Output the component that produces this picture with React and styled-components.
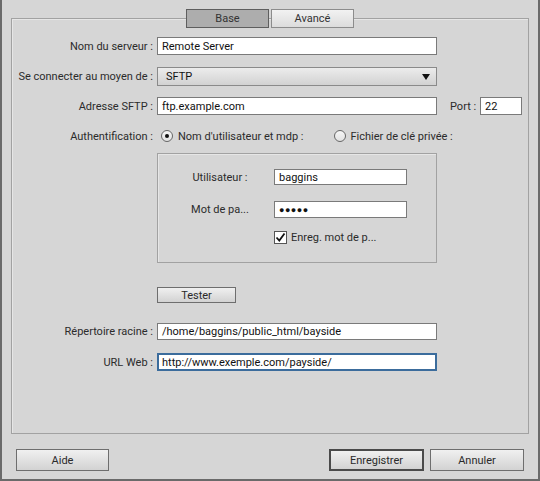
import React from 'react'
import styled, { createGlobalStyle } from 'styled-components'

const Global = createGlobalStyle`
  html, body {
    margin: 0;
    padding: 0;
    background: #d6d6d6;
  }
  * {
    box-sizing: border-box;
  }
`

const Window = styled.div`
  width: 540px;
  height: 481px;
  background: #d6d6d6;
  border: 2px solid #6a6a6a;
  border-top: none;
  padding: 18px 9px 0;
  display: flex;
  flex-direction: column;
  font-family: Roboto, 'Liberation Sans', Arial, sans-serif;
  font-size: 11px;
  color: #2b2b2b;
`

const Panel = styled.div`
  height: 416px;
  border: 1px solid #a2a2a2;
  box-shadow: inset 1px 1px 0 #e6e6e6;
`

const TabBar = styled.div`
  display: flex;
  justify-content: center;
  gap: 2px;
  margin-top: -10px;
`

const Tab = styled.div`
  width: 83px;
  height: 19px;
  display: flex;
  align-items: center;
  justify-content: center;
  border: 1px solid ${p => (p.$active ? '#5e5e5e' : '#8c8c8c')};
  background: ${p =>
    p.$active ? '#adadad' : 'linear-gradient(#f2f2f2, #dcdcdc)'};
  color: #333;
`

const Form = styled.div`
  display: flex;
  flex-direction: column;
  padding-top: 9px;
`

const Row = styled.div`
  display: flex;
  align-items: center;
  min-height: ${p => p.$h || 0}px;
  margin-top: ${p => p.$gap || 0}px;
`

const Label = styled.div`
  width: 141px;
  margin-right: 4px;
  text-align: right;
  white-space: nowrap;
`

const Input = styled.div`
  width: ${p => p.$w || 280}px;
  height: ${p => p.$h || 18}px;
  background: #fff;
  border: ${p => (p.$focus ? '2px solid #3b6c9c' : '1px solid #7a7a7a')};
  padding-left: ${p => (p.$focus ? 3 : 4)}px;
  display: flex;
  align-items: center;
  color: #111;
  white-space: nowrap;
  overflow: hidden;
`

const Dots = styled.span`
  font-size: 9px;
  letter-spacing: 0.5px;
`

const Select = styled.div`
  width: 280px;
  height: 19px;
  border: 1px solid #8a8a8a;
  background: linear-gradient(#ececec, #d2d2d2);
  display: flex;
  align-items: center;
  justify-content: space-between;
  padding: 0 6px 0 8px;
  color: #111;
`

const Arrow = styled.span`
  width: 0;
  height: 0;
  border-left: 4px solid transparent;
  border-right: 4px solid transparent;
  border-top: 6px solid #111;
`

const PortLabel = styled.span`
  width: 43px;
  padding-left: 13px;
  white-space: nowrap;
`

const Radio = styled.span`
  width: 12px;
  height: 12px;
  border-radius: 50%;
  border: 1px solid #666;
  background: linear-gradient(#f6f6f6, #e2e2e2);
  display: inline-flex;
  align-items: center;
  justify-content: center;
  margin-right: 5px;
  &::after {
    content: '';
    width: 4px;
    height: 4px;
    border-radius: 50%;
    background: ${p => (p.$checked ? '#111' : 'transparent')};
  }
`

const Option = styled.div`
  display: flex;
  align-items: center;
  white-space: nowrap;
  margin-left: ${p => p.$gap || 0}px;
`

const Group = styled.div`
  margin-left: 145px;
  width: 280px;
  height: 110px;
  border: 1px solid #a2a2a2;
  box-shadow: inset 1px 1px 0 #e6e6e6;
  padding: 15px 0 0 12px;
  display: flex;
  flex-direction: column;
`

const GroupLabel = styled.div`
  width: 100px;
  margin-right: 4px;
  text-align: center;
`

const Check = styled.span`
  width: 13px;
  height: 13px;
  border: 1px solid #555;
  background: #fff;
  margin-right: 4px;
  display: inline-flex;
  align-items: center;
  justify-content: center;
`

const Button = styled.div`
  width: ${p => p.$w || 93}px;
  height: ${p => p.$h || 22}px;
  border: ${p => (p.$default ? '2px solid #4a4a4a' : '1px solid #6e6e6e')};
  background: linear-gradient(#f0f0f0, #d2d2d2);
  display: flex;
  align-items: center;
  justify-content: center;
  color: #2a2a2a;
  margin-left: ${p => p.$ml || 0}px;
`

const Footer = styled.div`
  display: flex;
  align-items: center;
  margin-top: 15px;
  padding: 0 5px;
`

const Spacer = styled.div`
  flex: 1;
`

export default function App() {
  return (
    <>
      <Global />
      <Window>
        <Panel>
          <TabBar>
            <Tab $active>Base</Tab>
            <Tab>Avancé</Tab>
          </TabBar>
          <Form>
            <Row>
              <Label>Nom du serveur :</Label>
              <Input>Remote Server</Input>
            </Row>
            <Row $gap={12}>
              <Label>Se connecter au moyen de :</Label>
              <Select>
                SFTP
                <Arrow />
              </Select>
            </Row>
            <Row $gap={11}>
              <Label>Adresse SFTP :</Label>
              <Input>ftp.example.com</Input>
              <PortLabel>Port :</PortLabel>
              <Input $w={42}>22</Input>
            </Row>
            <Row $gap={13} $h={16}>
              <Label>Authentification :</Label>
              <Option $gap={4}>
                <Radio $checked />
                Nom d'utilisateur et mdp :
              </Option>
              <Option $gap={30}>
                <Radio />
                Fichier de clé privée :
              </Option>
            </Row>
            <Row $gap={9}>
              <Group>
                <Row>
                  <GroupLabel>Utilisateur :</GroupLabel>
                  <Input $w={133} $h={16}>baggins</Input>
                </Row>
                <Row $gap={16}>
                  <GroupLabel>Mot de pa...</GroupLabel>
                  <Input $w={133} $h={17}><Dots>●●●●●</Dots></Input>
                </Row>
                <Row $gap={13}>
                  <GroupLabel />
                  <Check>
                    <svg width="11" height="11" viewBox="0 0 11 11">
                      <path d="M1.5 5.5 L4.3 8.5 L9.5 1.5" fill="none" stroke="#111" strokeWidth="1.8" />
                    </svg>
                  </Check>
                  Enreg. mot de p...
                </Row>
              </Group>
            </Row>
            <Row $gap={24}>
              <Button $w={79} $h={16} $ml={145}>Tester</Button>
            </Row>
            <Row $gap={20}>
              <Label>Répertoire racine :</Label>
              <Input $h={17}>/home/baggins/public_html/bayside</Input>
            </Row>
            <Row $gap={13}>
              <Label>URL Web :</Label>
              <Input $focus>http://www.exemple.com/payside/</Input>
            </Row>
          </Form>
        </Panel>
        <Footer>
          <Button $w={93}>Aide</Button>
          <Spacer />
          <Button $w={95} $default>Enregistrer</Button>
          <Button $w={94} $ml={6}>Annuler</Button>
        </Footer>
      </Window>
    </>
  )
}
